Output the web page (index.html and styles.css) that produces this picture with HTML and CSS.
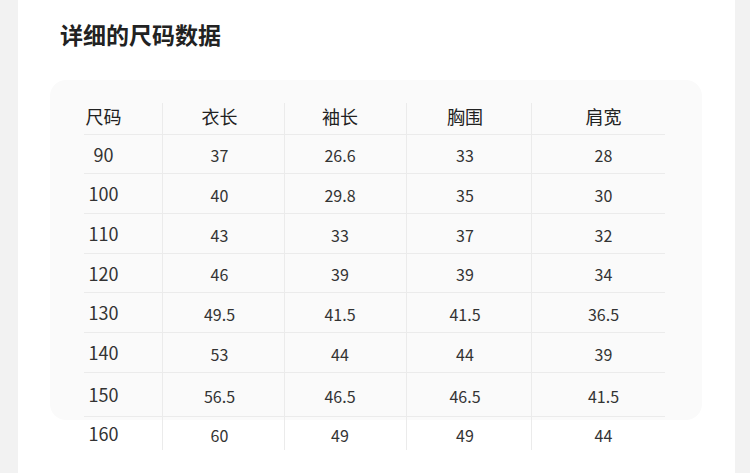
FILE: index.html
```html
<!DOCTYPE html>
<html lang="zh">
<head>
<meta charset="utf-8">
<title>详细的尺码数据</title>
<link rel="stylesheet" href="styles.css">
</head>
<body>
<div class="panel">
  <h1 class="title">详细的尺码数据</h1>
  <div class="card">
    <div class="table">
      <div class="row head">
        <div class="cell c1">尺码</div><div class="cell c2">衣长</div><div class="cell c3">袖长</div><div class="cell c4">胸围</div><div class="cell c5">肩宽</div>
      </div>
      <div class="row">
        <div class="cell c1">90</div><div class="cell c2">37</div><div class="cell c3">26.6</div><div class="cell c4">33</div><div class="cell c5">28</div>
      </div>
      <div class="row">
        <div class="cell c1">100</div><div class="cell c2">40</div><div class="cell c3">29.8</div><div class="cell c4">35</div><div class="cell c5">30</div>
      </div>
      <div class="row">
        <div class="cell c1">110</div><div class="cell c2">43</div><div class="cell c3">33</div><div class="cell c4">37</div><div class="cell c5">32</div>
      </div>
      <div class="row">
        <div class="cell c1">120</div><div class="cell c2">46</div><div class="cell c3">39</div><div class="cell c4">39</div><div class="cell c5">34</div>
      </div>
      <div class="row">
        <div class="cell c1">130</div><div class="cell c2">49.5</div><div class="cell c3">41.5</div><div class="cell c4">41.5</div><div class="cell c5">36.5</div>
      </div>
      <div class="row">
        <div class="cell c1">140</div><div class="cell c2">53</div><div class="cell c3">44</div><div class="cell c4">44</div><div class="cell c5">39</div>
      </div>
      <div class="row">
        <div class="cell c1">150</div><div class="cell c2">56.5</div><div class="cell c3">46.5</div><div class="cell c4">46.5</div><div class="cell c5">41.5</div>
      </div>
      <div class="row">
        <div class="cell c1">160</div><div class="cell c2">60</div><div class="cell c3">49</div><div class="cell c4">49</div><div class="cell c5">44</div>
      </div>
    </div>
  </div>
</div>
</body>
</html>
```
FILE: styles.css
```css
html, body {
  margin: 0;
  padding: 0;
}
body {
  background: #f2f2f2;
  font-family: "Noto Sans CJK SC", "Noto Sans", sans-serif;
  color: #333;
}
.panel {
  margin-left: 18px;
  width: 717px;
  height: 473px;
  background: #fff;
  overflow: hidden;
  padding-top: 19px;
  box-sizing: border-box;
}
.title {
  margin: 0 0 31px 42px;
  font-size: 23px;
  line-height: 30px;
  font-weight: 700;
  color: #222;
}
.card {
  margin-left: 32px;
  width: 652px;
  height: 340px;
  box-sizing: border-box;
  background: #fafafa;
  border-radius: 16px;
  padding: 23px 0 0 34px;
}
.table {
  width: 581px;
}
.row {
  display: grid;
  grid-template-columns: 79px 122px 122px 125px 133px;
  height: 40px;
  box-sizing: border-box;
  border-bottom: 1px solid #ebebeb;
}
.row:nth-child(1) { height: 32px; }
.row:nth-child(2) { height: 39px; }
.row:nth-child(5) { height: 39px; }
.row:nth-child(8) { height: 44px; }
.row:nth-child(9) { height: 33px; border-bottom: none; }
.cell {
  display: flex;
  align-items: center;
  justify-content: center;
  border-right: 1px solid #ebebeb;
  font-size: 16px;
  padding-top: 2px;
  box-sizing: border-box;
}
.cell.c1 {
  font-size: 18px;
  padding-top: 0;
  padding-bottom: 1px;
  padding-right: 39px;
}
.cell.c2 { padding-right: 8px; }
.cell.c3 { padding-right: 11px; }
.cell.c4 { padding-right: 8px; }
.cell.c5 { padding-left: 10px; border-right: none; }
.head .cell {
  font-size: 18px;
  color: #222;
  padding-top: 0;
  padding-bottom: 6px;
}
```
